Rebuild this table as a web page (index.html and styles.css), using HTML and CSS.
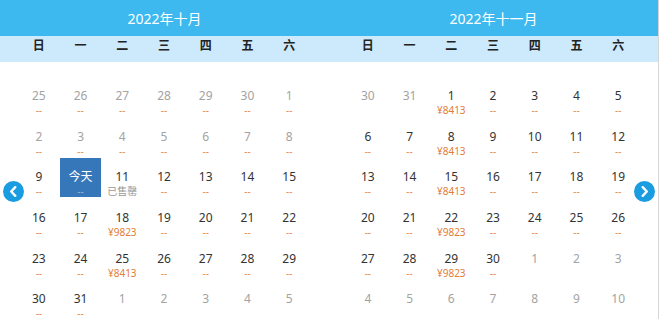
FILE: index.html
```html
<!DOCTYPE html>
<html lang="zh-CN">
<head>
<meta charset="utf-8">
<title>日历</title>
<link rel="stylesheet" href="styles.css">
</head>
<body>
<div class="calendar">
  <div class="months">
    <section class="month">
      <div class="title">2022年十月</div>
      <div class="weekdays"><span>日</span><span>一</span><span>二</span><span>三</span><span>四</span><span>五</span><span>六</span></div>
      <div class="days">
        <div class="day muted"><span class="num">25</span><span class="price dash">--</span></div>
        <div class="day muted"><span class="num">26</span><span class="price dash">--</span></div>
        <div class="day muted"><span class="num">27</span><span class="price dash">--</span></div>
        <div class="day muted"><span class="num">28</span><span class="price dash">--</span></div>
        <div class="day muted"><span class="num">29</span><span class="price dash">--</span></div>
        <div class="day muted"><span class="num">30</span><span class="price dash">--</span></div>
        <div class="day muted"><span class="num">1</span><span class="price dash">--</span></div>

        <div class="day muted"><span class="num">2</span><span class="price dash">--</span></div>
        <div class="day muted"><span class="num">3</span><span class="price dash">--</span></div>
        <div class="day muted"><span class="num">4</span><span class="price dash">--</span></div>
        <div class="day muted"><span class="num">5</span><span class="price dash">--</span></div>
        <div class="day muted"><span class="num">6</span><span class="price dash">--</span></div>
        <div class="day muted"><span class="num">7</span><span class="price dash">--</span></div>
        <div class="day muted"><span class="num">8</span><span class="price dash">--</span></div>

        <div class="day"><span class="num">9</span><span class="price dash">--</span></div>
        <div class="day today"><span class="num">今天</span><span class="price dash">--</span></div>
        <div class="day"><span class="num">11</span><span class="price sold">已售罄</span></div>
        <div class="day"><span class="num">12</span><span class="price dash">--</span></div>
        <div class="day"><span class="num">13</span><span class="price dash">--</span></div>
        <div class="day"><span class="num">14</span><span class="price dash">--</span></div>
        <div class="day"><span class="num">15</span><span class="price dash">--</span></div>

        <div class="day"><span class="num">16</span><span class="price dash">--</span></div>
        <div class="day"><span class="num">17</span><span class="price dash">--</span></div>
        <div class="day"><span class="num">18</span><span class="price">¥9823</span></div>
        <div class="day"><span class="num">19</span><span class="price dash">--</span></div>
        <div class="day"><span class="num">20</span><span class="price dash">--</span></div>
        <div class="day"><span class="num">21</span><span class="price dash">--</span></div>
        <div class="day"><span class="num">22</span><span class="price dash">--</span></div>

        <div class="day"><span class="num">23</span><span class="price dash">--</span></div>
        <div class="day"><span class="num">24</span><span class="price dash">--</span></div>
        <div class="day"><span class="num">25</span><span class="price">¥8413</span></div>
        <div class="day"><span class="num">26</span><span class="price dash">--</span></div>
        <div class="day"><span class="num">27</span><span class="price dash">--</span></div>
        <div class="day"><span class="num">28</span><span class="price dash">--</span></div>
        <div class="day"><span class="num">29</span><span class="price dash">--</span></div>

        <div class="day"><span class="num">30</span><span class="price dash">--</span></div>
        <div class="day"><span class="num">31</span><span class="price dash">--</span></div>
        <div class="day muted"><span class="num">1</span></div>
        <div class="day muted"><span class="num">2</span></div>
        <div class="day muted"><span class="num">3</span></div>
        <div class="day muted"><span class="num">4</span></div>
        <div class="day muted"><span class="num">5</span></div>
      </div>
    </section>
    <section class="month">
      <div class="title">2022年十一月</div>
      <div class="weekdays"><span>日</span><span>一</span><span>二</span><span>三</span><span>四</span><span>五</span><span>六</span></div>
      <div class="days">
        <div class="day muted"><span class="num">30</span></div>
        <div class="day muted"><span class="num">31</span></div>
        <div class="day"><span class="num">1</span><span class="price">¥8413</span></div>
        <div class="day"><span class="num">2</span><span class="price dash">--</span></div>
        <div class="day"><span class="num">3</span><span class="price dash">--</span></div>
        <div class="day"><span class="num">4</span><span class="price dash">--</span></div>
        <div class="day"><span class="num">5</span><span class="price dash">--</span></div>

        <div class="day"><span class="num">6</span><span class="price dash">--</span></div>
        <div class="day"><span class="num">7</span><span class="price dash">--</span></div>
        <div class="day"><span class="num">8</span><span class="price">¥8413</span></div>
        <div class="day"><span class="num">9</span><span class="price dash">--</span></div>
        <div class="day"><span class="num">10</span><span class="price dash">--</span></div>
        <div class="day"><span class="num">11</span><span class="price dash">--</span></div>
        <div class="day"><span class="num">12</span><span class="price dash">--</span></div>

        <div class="day"><span class="num">13</span><span class="price dash">--</span></div>
        <div class="day"><span class="num">14</span><span class="price dash">--</span></div>
        <div class="day"><span class="num">15</span><span class="price">¥8413</span></div>
        <div class="day"><span class="num">16</span><span class="price dash">--</span></div>
        <div class="day"><span class="num">17</span><span class="price dash">--</span></div>
        <div class="day"><span class="num">18</span><span class="price dash">--</span></div>
        <div class="day"><span class="num">19</span><span class="price dash">--</span></div>

        <div class="day"><span class="num">20</span><span class="price dash">--</span></div>
        <div class="day"><span class="num">21</span><span class="price dash">--</span></div>
        <div class="day"><span class="num">22</span><span class="price">¥9823</span></div>
        <div class="day"><span class="num">23</span><span class="price dash">--</span></div>
        <div class="day"><span class="num">24</span><span class="price dash">--</span></div>
        <div class="day"><span class="num">25</span><span class="price dash">--</span></div>
        <div class="day"><span class="num">26</span><span class="price dash">--</span></div>

        <div class="day"><span class="num">27</span><span class="price dash">--</span></div>
        <div class="day"><span class="num">28</span><span class="price dash">--</span></div>
        <div class="day"><span class="num">29</span><span class="price">¥9823</span></div>
        <div class="day"><span class="num">30</span><span class="price dash">--</span></div>
        <div class="day muted"><span class="num">1</span></div>
        <div class="day muted"><span class="num">2</span></div>
        <div class="day muted"><span class="num">3</span></div>

        <div class="day muted"><span class="num">4</span></div>
        <div class="day muted"><span class="num">5</span></div>
        <div class="day muted"><span class="num">6</span></div>
        <div class="day muted"><span class="num">7</span></div>
        <div class="day muted"><span class="num">8</span></div>
        <div class="day muted"><span class="num">9</span></div>
        <div class="day muted"><span class="num">10</span></div>
      </div>
    </section>
  </div>
  <button class="nav prev" aria-label="上个月">
    <svg width="21" height="21" viewBox="0 0 21 21"><circle cx="10.5" cy="10.5" r="10.5" fill="#1a9ce0"/><path d="M12.3 6.2 L8.2 10.5 L12.3 14.8" fill="none" stroke="#fff" stroke-width="2.4" stroke-linecap="round" stroke-linejoin="round"/></svg>
  </button>
  <button class="nav next" aria-label="下个月">
    <svg width="21" height="21" viewBox="0 0 21 21"><circle cx="10.5" cy="10.5" r="10.5" fill="#1a9ce0"/><path d="M8.7 6.2 L12.8 10.5 L8.7 14.8" fill="none" stroke="#fff" stroke-width="2.4" stroke-linecap="round" stroke-linejoin="round"/></svg>
  </button>
</div>
</body>
</html>
```

FILE: styles.css
```css
html, body {
  margin: 0;
  padding: 0;
  background: #fff;
}

body {
  font-family: "Noto Sans", "Noto Sans CJK SC", sans-serif;
  color: #333;
}

.calendar {
  position: relative;
  width: 658px;
  height: 319px;
  border-right: 1px solid #d4d4d4;
  overflow: hidden;
}

.months {
  display: flex;
}

.month {
  width: 329px;
  flex: none;
}

.title {
  height: 36px;
  line-height: 37px;
  background: #3db9ef;
  color: #fff;
  font-size: 14px;
  text-align: center;
}

.weekdays {
  height: 26px;
  background: #cde9fc;
  display: grid;
  grid-template-columns: repeat(7, 1fr);
  padding: 0 19px 0 18px;
  line-height: 20px;
  font-size: 12px;
  font-weight: bold;
  color: #222;
  text-align: center;
}

.days {
  display: grid;
  grid-template-columns: repeat(7, 1fr);
  grid-auto-rows: 39px;
  row-gap: 1.65px;
  padding: 15px 19px 0 18px;
}

.day {
  display: flex;
  flex-direction: column;
  align-items: center;
  padding-top: 11px;
  box-sizing: border-box;
  height: 39px;
}

.num {
  font-size: 12px;
  line-height: 16px;
  color: #333;
}

.muted .num {
  color: #a3a3a3;
}

.price {
  font-size: 10px;
  line-height: 13px;
  color: #e47c36;
}

.price.dash {
  color: #e98a45;
}

.price.sold {
  color: #9a9a9a;
}

.today {
  background: #3677b9;
}

.today .num {
  color: #fff;
}

.today .price.dash {
  color: #9db3cc;
}

.nav {
  position: absolute;
  top: 181px;
  width: 21px;
  height: 21px;
  padding: 0;
  border: 0;
  background: none;
  display: block;
  line-height: 0;
}

.nav svg {
  display: block;
}

.prev {
  left: 3px;
}

.next {
  left: 634px;
}
```
